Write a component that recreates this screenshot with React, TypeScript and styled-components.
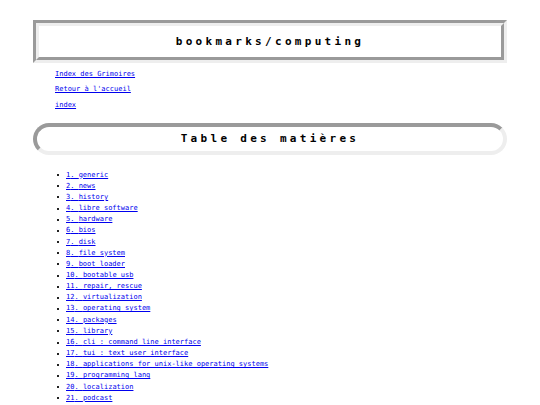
import React from "react";
import styled, { createGlobalStyle } from "styled-components";

const GlobalStyle = createGlobalStyle`
  html, body {
    margin: 0;
    padding: 0;
    background: #fff;
  }
  body {
    font-family: "DejaVu Sans Mono", "Liberation Mono", monospace;
    font-size: 7px;
    color: #000;
  }
`;

const Page = styled.div`
  padding: 20px 33px;
`;

const Banner = styled.h1`
  margin: 0;
  border: 6px groove #eee;
  height: 31px;
  line-height: 31px;
  text-align: center;
  font-size: 11px;
  font-weight: bold;
  letter-spacing: 3.3px;
`;

const Nav = styled.nav`
  display: flex;
  flex-direction: column;
  align-items: flex-start;
  gap: 7.3px;
  margin-top: 7px;
  padding-left: 22px;
`;

const Link = styled.a`
  color: #0000ee;
  line-height: 8px;
`;

const Section = styled.h2`
  margin: 14px 0 0;
  border: 4px inset #eee;
  border-radius: 16px;
  height: 24px;
  line-height: 24px;
  text-align: center;
  font-size: 11px;
  font-weight: bold;
  letter-spacing: 3.3px;
`;

const Toc = styled.ul`
  margin: 15px 0 0;
  padding-left: 24px;
  list-style: none;
  line-height: 11.15px;
`;

const TocItem = styled.li`
  display: flex;
  align-items: center;

  &::before {
    content: "";
    width: 2px;
    height: 2px;
    margin-right: 7px;
    background: #222;
  }

  a {
    color: #0000ee;
  }
`;

const entries = [
  "generic",
  "news",
  "history",
  "libre software",
  "hardware",
  "bios",
  "disk",
  "file system",
  "boot loader",
  "bootable usb",
  "repair, rescue",
  "virtualization",
  "operating system",
  "packages",
  "library",
  "cli : command line interface",
  "tui : text user interface",
  "applications for unix-like operating systems",
  "programming lang",
  "localization",
  "podcast",
];

const App: React.FunctionComponent<{}> = () => {
  return (
    <Page>
      <GlobalStyle />
      <Banner>bookmarks/computing</Banner>
      <Nav>
        <Link href="#">Index des Grimoires</Link>
        <Link href="#">Retour à l'accueil</Link>
        <Link href="#">index</Link>
      </Nav>
      <Section>Table des matières</Section>
      <Toc>
        {entries.map((entry, i) => (
          <TocItem key={entry}>
            <a href={`#s${i + 1}`}>
              {i + 1}. {entry}
            </a>
          </TocItem>
        ))}
      </Toc>
    </Page>
  );
};

export default App;
